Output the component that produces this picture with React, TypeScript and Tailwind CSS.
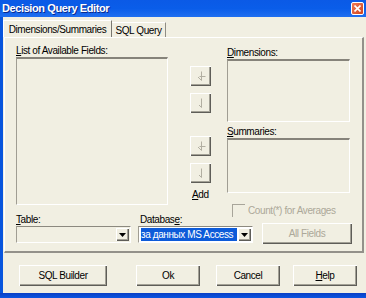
import React from "react";

const raised =
  "bg-[#f1efe2] shadow-[inset_1px_1px_0_#ffffff,inset_-1px_-1px_0_#5e5d58,inset_-2px_-2px_0_#a3a196]";
const sunken =
  "border-t border-l border-t-[#8c897f] border-l-[#a09d93] border-r border-b border-r-[#ffffff] border-b-[#ffffff]";
const listBox =
  "border-t-2 border-l border-t-[#86837a] border-l-[#a09d93] border-r border-b border-r-[#ffffff] border-b-[#ffffff]";

function ArrowBtn({ double }: { double?: boolean }) {
  return (
    <div className={`w-[21px] h-[20px] flex items-center justify-center ${raised}`}>
      <svg width="12" height="12" viewBox="0 0 12 12" fill="none" stroke="#b2afa2" strokeWidth="1">
        {double ? (
          <path d="M6.5 1.5v9M3 7l3.5 3.5M4.5 6.5h6" />
        ) : (
          <path d="M6.5 1.5v9M4 8l2.5 2.5" />
        )}
      </svg>
    </div>
  );
}

function DropBtn() {
  return (
    <div className={`w-[13px] h-[13px] flex items-center justify-center ${raised}`}>
      <svg width="7" height="4" viewBox="0 0 7 4">
        <path d="M0 0h7L3.5 4z" fill="#000" />
      </svg>
    </div>
  );
}

function PushBtn({ children, className }: { children: React.ReactNode; className: string }) {
  return (
    <div className={`h-[21px] flex items-center justify-center text-black ${raised} ${className}`}>
      {children}
    </div>
  );
}

export default function App() {
  return (
    <div className="w-[366px] h-[298px] overflow-hidden flex flex-col whitespace-nowrap bg-[#0a55e2] font-['Liberation_Sans',Arial,sans-serif] text-[10px] tracking-[-0.4px] leading-[13px] text-black">
      {/* title bar */}
      <div className="h-[17px] flex items-center pl-[2px] pr-[2px] bg-gradient-to-b from-[#0b5ae6] via-[#0a5de9] to-[#1f6ff0]">
        <span className="font-bold text-[11px] text-white tracking-[-0.4px] [text-shadow:1px_1px_0_#0a2a8c]">
          Decision Query Editor
        </span>
        <div className="ml-auto w-[13px] h-[13px] rounded-[2px] border border-white bg-gradient-to-br from-[#ee7a55] to-[#d2421a] flex items-center justify-center">
          <svg width="7" height="7" viewBox="0 0 7 7" stroke="#fff" strokeWidth="1.6">
            <path d="M0.5 0.5l6 6M6.5 0.5l-6 6" />
          </svg>
        </div>
      </div>

      <div className="flex-1 flex min-h-0">
        <div className="w-[3px] bg-[#0855dd]" />
        <div className="flex-1 bg-[#f1efe2] flex flex-col">
          {/* tabs */}
          <div className="h-[20px] flex items-end">
            <div className="w-[109px] h-[17px] border-t border-l border-t-white border-l-white border-r border-r-[#7a7870] flex items-center justify-center">
              Dimensions/Summaries
            </div>
            <div className="w-[54px] h-[15px] border-t border-t-white border-r border-r-[#8f8d84] flex items-center justify-center">
              SQL Query
            </div>
          </div>

          {/* tab panel */}
          <div className="ml-[1px] mr-[2px] h-[216px] border-t border-l border-t-white border-l-white border-r-2 border-b-2 border-r-[#93918a] border-b-[#93918a] flex flex-col">
            <div className="h-[175px] flex items-start">
              <div className="ml-[11px] pt-[6px] flex flex-col">
                <div>
                  <u>L</u>ist of Available Fields:
                </div>
                <div className={`w-[152px] h-[148px] ${listBox}`} />
              </div>

              <div className="ml-[22px] pt-[28px] flex flex-col">
                <ArrowBtn double />
                <div className="mt-[7px]">
                  <ArrowBtn />
                </div>
                <div className="mt-[23px]">
                  <ArrowBtn double />
                </div>
                <div className="mt-[7px]">
                  <ArrowBtn />
                </div>
                <div className="mt-[5px] pl-[2px]">
                  <u>A</u>dd
                </div>
              </div>

              <div className="ml-[16px] pt-[8px] flex flex-col">
                <div>
                  <u>D</u>imensions:
                </div>
                <div className={`w-[123px] h-[63px] ${listBox}`} />
                <div className="mt-[3px]">
                  <u>S</u>ummaries:
                </div>
                <div className={`w-[123px] h-[55px] ${listBox}`} />
                <div className="mt-[11px] pl-[5px] flex items-center gap-[3px] text-[#aca899]">
                  <div className="w-[13px] h-[13px] border-t border-l border-[#a8a59a]" />
                  <span>Count(*) for Averages</span>
                </div>
              </div>
            </div>

            <div className="flex items-start">
              <div className="ml-[11px] flex flex-col">
                <div>
                  <u>T</u>able:
                </div>
                <div className={`w-[115px] h-[17px] flex items-center justify-end pr-[1px] ${sunken}`}>
                  <DropBtn />
                </div>
              </div>
              <div className="ml-[7px] flex flex-col">
                <div className="pl-[2px]">
                  Databas<u>e</u>:
                </div>
                <div className={`w-[115px] h-[17px] flex items-center pl-[2px] pr-[1px] bg-white ${sunken}`}>
                  <span className="w-[96px] h-[13px] bg-[#0d5bd9] text-white overflow-hidden leading-[13px]">
                    за данных MS Access
                  </span>
                  <div className="ml-auto">
                    <DropBtn />
                  </div>
                </div>
              </div>
              <div className={`ml-[9px] mt-[10px] w-[90px] h-[21px] flex items-center justify-center text-[#aca899] ${raised}`}>
                All Fields
              </div>
            </div>
          </div>

          {/* dialog buttons */}
          <div className="mt-[12px] flex">
            <PushBtn className="ml-[16px] w-[88px]">SQL Builder</PushBtn>
            <PushBtn className="ml-[29px] w-[64px]">Ok</PushBtn>
            <PushBtn className="ml-[16px] w-[64px]">Cancel</PushBtn>
            <PushBtn className="ml-[13px] w-[64px]">
              <u>H</u>elp
            </PushBtn>
          </div>
        </div>
      </div>

      <div className="h-[5px] bg-gradient-to-b from-[#0a3fc4] to-[#0a55e2]" />
    </div>
  );
}
